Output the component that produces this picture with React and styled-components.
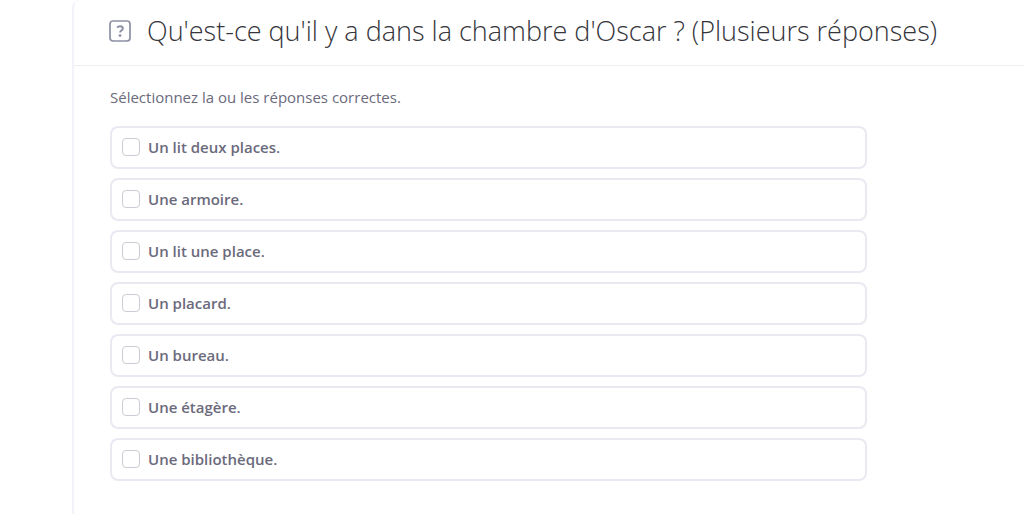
import React from "react";
import styled, { createGlobalStyle } from "styled-components";

const GlobalStyle = createGlobalStyle`
  *, *::before, *::after { box-sizing: border-box; }
  body {
    margin: 0;
    background: #fff;
    color: #6b6a7c;
    font-family: "Open Sans", "Noto Sans", sans-serif;
  }
`;

const Page = styled.main`
  min-height: 100vh;
  padding-left: 72px;
  display: flex;
`;

const Card = styled.form`
  flex: 1;
  min-width: 0;
  border-left: 2px solid #f2f2f9;
  border-top-left-radius: 8px;
`;

const Header = styled.header`
  display: flex;
  align-items: center;
  gap: 15px;
  min-height: 66px;
  padding: 0 24px 4px 34px;
  border-bottom: 1px solid #edeef1;
`;

const QuestionIcon = styled.svg`
  flex: none;
  width: 24px;
  height: 24px;
`;

const Title = styled.h1`
  margin: 0;
  color: #35353b;
  font-size: 27px;
  font-weight: 300;
  line-height: 36px;
`;

const Answers = styled.fieldset`
  min-width: 0;
  margin: 0;
  padding: 20px 36px 32px;
  border: 0;
`;

const Hint = styled.p`
  margin: 0 0 18px;
  font-size: 15px;
  line-height: 22px;
`;

const Options = styled.ul`
  display: grid;
  gap: 9px;
  max-width: 757px;
  margin: 0;
  padding: 0;
  list-style: none;
`;

const Option = styled.label`
  display: flex;
  align-items: center;
  gap: 8px;
  min-height: 43px;
  padding: 8px 10px 9px;
  border: 2px solid #e9eaf1;
  border-radius: 8px;
  font-size: 15px;
  font-weight: 600;
  line-height: 22px;
  cursor: pointer;
`;

const Checkbox = styled.input`
  appearance: none;
  flex: none;
  width: 18px;
  height: 18px;
  margin: 0;
  border: 1px solid #cbccd4;
  border-radius: 4px;
  background: #fff;
  cursor: pointer;

  &:checked {
    border-color: #6b6a7c;
    background: #6b6a7c;
    box-shadow: inset 0 0 0 3px #fff;
  }
`;

const answers = [
  "Un lit deux places.",
  "Une armoire.",
  "Un lit une place.",
  "Un placard.",
  "Un bureau.",
  "Une étagère.",
  "Une bibliothèque.",
];

export default function App() {
  return (
    <>
      <GlobalStyle />
      <Page>
        <Card>
          <Header>
            <QuestionIcon viewBox="0 0 24 24" fill="none" aria-hidden="true">
              <rect x="2" y="2" width="20" height="20" rx="3" stroke="#8d90a5" strokeWidth="1.7" />
              <path d="M9.2 8.8C9.8 7.700 10.800 7.200 12 7.200c1.700 0 2.800.9 2.800 2.300 0 2-2.700 2.100-2.700 4" stroke="#8d90a5" strokeWidth="2" />
              <circle cx="12" cy="16.600" r="1.400" fill="#8d90a5" />
            </QuestionIcon>
            <Title>Qu'est-ce qu'il y a dans la chambre d'Oscar ? (Plusieurs réponses)</Title>
          </Header>
          <Answers aria-labelledby="hint">
            <Hint id="hint">Sélectionnez la ou les réponses correctes.</Hint>
            <Options>
              {answers.map((text, i) => (
                <li key={text}>
                  <Option htmlFor={`answer-${i}`}>
                    <Checkbox type="checkbox" id={`answer-${i}`} name="answers" value={text} />
                    {text}
                  </Option>
                </li>
              ))}
            </Options>
          </Answers>
        </Card>
      </Page>
    </>
  );
}
